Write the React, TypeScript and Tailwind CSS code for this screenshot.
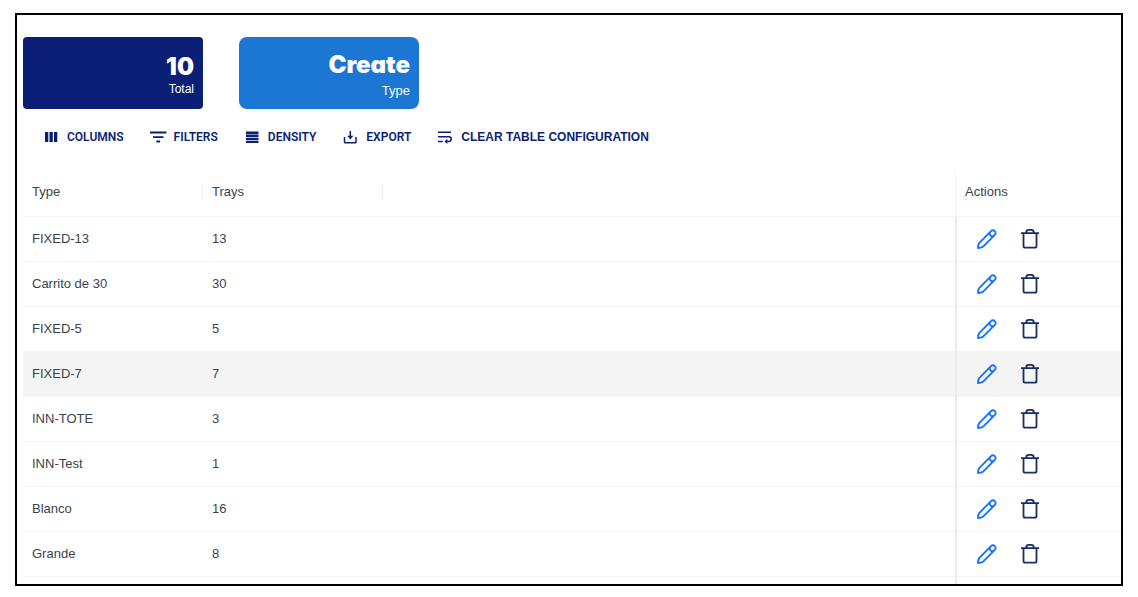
import React from "react";

type TrayType = { name: string; trays: number };

const rows: TrayType[] = [
  { name: "FIXED-13", trays: 13 },
  { name: "Carrito de 30", trays: 30 },
  { name: "FIXED-5", trays: 5 },
  { name: "FIXED-7", trays: 7 },
  { name: "INN-TOTE", trays: 3 },
  { name: "INN-Test", trays: 1 },
  { name: "Blanco", trays: 16 },
  { name: "Grande", trays: 8 },
];

const icons = {
  columns: <path fill="currentColor" d="M4 5h3.300v10H4zM8.500 5h3.300v10H8.500zM13 5h3.300v10H13z" />,
  filters: <path fill="currentColor" d="M2 4.600h16.500v1.900H2zM5 9.200h10.500v1.900H5zM8.400 13.600h3.700v1.900H8.400z" />,
  density: <path fill="currentColor" d="M4 4.500h12.500v2.400H4zM4 7.600h12.500v2.400H4zM4 10.700h12.500v2.400H4zM4 13.800h12.500v2.200H4z" />,
  download: (
    <g fill="none" stroke="currentColor" strokeWidth="1.5">
      <path d="M4.5 10v5q0 .8.8.8h9.900q.8 0 .8-.8v-5M10.300 4v7" />
      <path d="M7.200 8.800h6.200L10.300 12.400z" fill="currentColor" stroke="none" />
    </g>
  ),
  clear: (
    <g fill="none" stroke="currentColor" strokeWidth="1.5">
      <path d="M3 5.300h13M3 9.700h10.900a2.300 2.300 0 0 1 0 4.700h-2M3 14.400h4.800" />
      <path d="M12.300 11.800v5.200l-2.800-2.600z" fill="currentColor" stroke="none" />
    </g>
  ),
};

function ToolButton({ icon, children, plain }: { icon: keyof typeof icons; children: React.ReactNode; plain?: boolean }) {
  return (
    <button type="button" className="flex h-6 items-center gap-1.5 whitespace-nowrap text-[#0a1f75]">
      <svg viewBox="0 0 20 20" className="size-5" aria-hidden="true">
        {icons[icon]}
      </svg>
      <span className={plain ? "font-['Liberation_Sans',sans-serif] text-xs font-bold" : "font-[Roboto,sans-serif] text-xs font-semibold"}>
        {children}
      </span>
    </button>
  );
}

function PencilIcon() {
  return (
    <svg viewBox="0 0 24 24" className="size-6" fill="none" stroke="currentColor" strokeWidth="1.9" strokeLinejoin="round" aria-hidden="true">
      <path d="M3 21c0-2 .4-3.800 1.200-4.900L16 4.100a2.600 2.600 0 0 1 3.800 0 2.600 2.600 0 0 1 0 3.800L7.900 19.800C6.700 20.600 5 21 3 21z" />
      <path d="M15 5.200a2.800 2.800 0 0 0 3.700 3.800" />
    </svg>
  );
}

function TrashIcon() {
  return (
    <svg viewBox="0 0 24 24" className="size-6" fill="none" stroke="currentColor" strokeWidth="1.8" strokeLinejoin="round" aria-hidden="true">
      <path d="M3 6.200h18M5.500 6.200v12.800q0 1.700 1.700 1.700h9.600q1.700 0 1.700-1.700V6.200M8.300 6.200v-1q0-2.400 2.400-2.400h2.600q2.400 0 2.400 2.400v1" />
    </svg>
  );
}

export default function App() {
  return (
    <div className="bg-white px-[15px] pt-[13px] pb-[11px] font-['Liberation_Sans',sans-serif]">
      <main className="border-2 border-black pl-1.5">
        <section className="flex gap-9 pt-[22px]">
          <div className="flex h-[72px] w-[180px] flex-col items-end justify-center rounded bg-[#0a1f75] pt-2 pr-[9px] text-white">
            <strong className="font-[Inter,sans-serif] text-2xl leading-6 font-black">10</strong>
            <span className="text-xs leading-5">Total</span>
          </div>
          <button
            type="button"
            className="flex h-[72px] w-[180px] flex-col items-end justify-center rounded-lg bg-[#1b76d4] pt-2 pr-[9px] text-white"
          >
            <strong className="font-[Inter,sans-serif] text-2xl leading-7 font-black [font-feature-settings:'cv11']">Create</strong>
            <span className="text-[13px] leading-6">Type</span>
          </button>
        </section>

        <div className="flex gap-6 px-[18px] pt-4 pb-5">
          <ToolButton icon="columns">COLUMNS</ToolButton>
          <ToolButton icon="filters">FILTERS</ToolButton>
          <ToolButton icon="density">DENSITY</ToolButton>
          <ToolButton icon="download">EXPORT</ToolButton>
          <ToolButton icon="clear" plain>CLEAR TABLE CONFIGURATION</ToolButton>
        </div>

        <table className="w-full table-fixed border-separate border-spacing-0 text-[13px] text-[#3c434b]">
          <colgroup>
            <col className="w-[180px]" />
            <col className="w-[180px]" />
            <col />
            <col className="w-[166px]" />
          </colgroup>
          <thead>
            <tr className="h-12 text-left">
              <th scope="col" className="border-b border-[#f3f3f3] p-0 pb-0.5 font-normal">
                <div className="border-r border-[#ececec] pl-[9px] leading-3">Type</div>
              </th>
              <th scope="col" className="border-b border-[#f3f3f3] p-0 pb-0.5 font-normal">
                <div className="border-r border-[#ececec] pl-[9px] leading-3">Trays</div>
              </th>
              <td className="border-b border-[#f3f3f3]" />
              <th scope="col" className="border-b border-l border-[#f3f3f3] p-0 pb-0.5 pl-[9px] font-normal">Actions</th>
            </tr>
          </thead>
          <tbody>
            {rows.map((row) => (
              <tr key={row.name} className={row.name === "FIXED-7" ? "h-[45px] bg-[#f4f4f4]" : "h-[45px]"}>
                <td className="border-b border-[#f3f3f3] p-0 pl-[9px]">{row.name}</td>
                <td className="border-b border-[#f3f3f3] p-0 pl-[9px]">{row.trays}</td>
                <td className="border-b border-[#f3f3f3] p-0" />
                <td className="border-b border-l-2 border-b-[#f3f3f3] border-l-[#ebebeb] p-0">
                  <div className="flex gap-[19px] pl-[18px]">
                    <button type="button" aria-label={`Edit ${row.name}`} className="text-[#1673ff]">
                      <PencilIcon />
                    </button>
                    <button type="button" aria-label={`Delete ${row.name}`} className="text-[#172e66]">
                      <TrashIcon />
                    </button>
                  </div>
                </td>
              </tr>
            ))}
            <tr className="h-[7px]" aria-hidden="true">
              <td className="p-0" colSpan={3} />
              <td className="border-l-2 border-[#ebebeb] p-0" />
            </tr>
          </tbody>
        </table>
      </main>
    </div>
  );
}
